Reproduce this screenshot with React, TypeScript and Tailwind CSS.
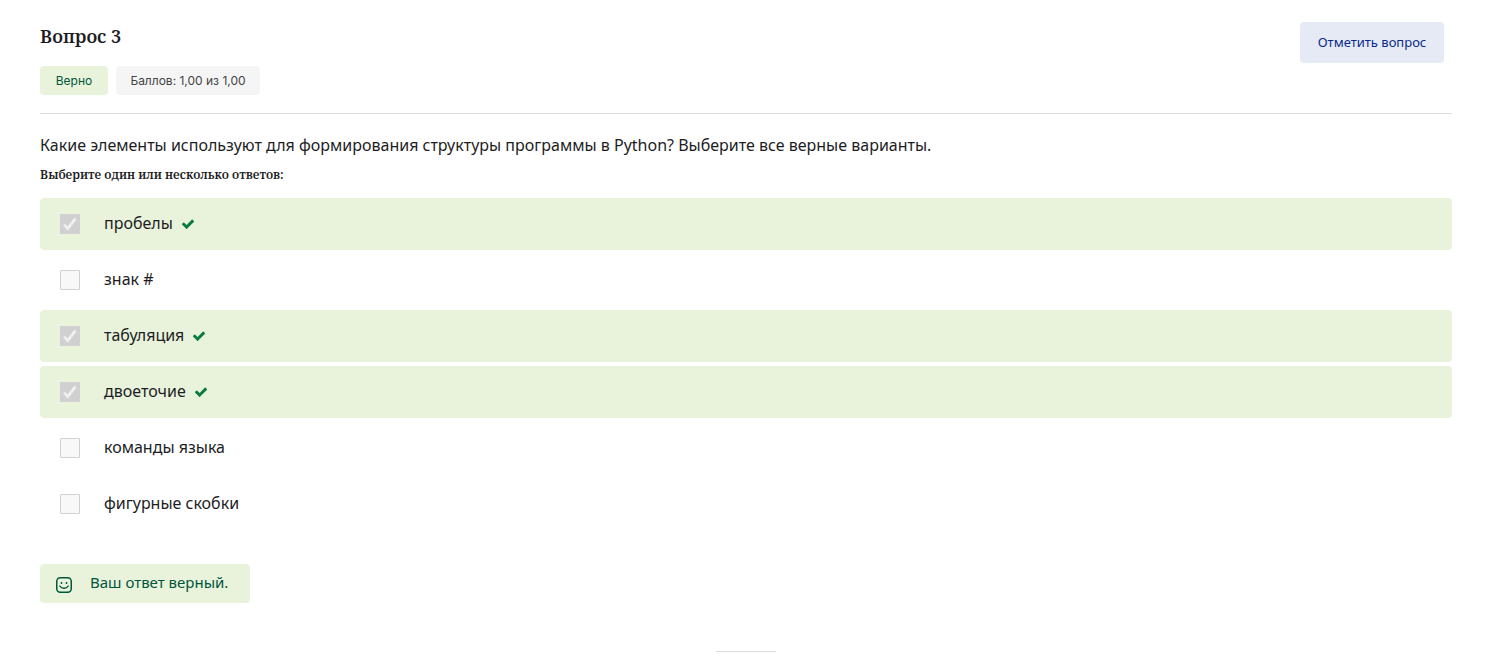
import React from "react";

type Answer = { id: string; label: string; chosen: boolean };

const answers: Answer[] = [
  { id: "a1", label: "пробелы", chosen: true },
  { id: "a2", label: "знак #", chosen: false },
  { id: "a3", label: "табуляция", chosen: true },
  { id: "a4", label: "двоеточие", chosen: true },
  { id: "a5", label: "команды языка", chosen: false },
  { id: "a6", label: "фигурные скобки", chosen: false },
];

const checkPath =
  "M1671 566q0 40-28 68l-724 724-136 136q-28 28-68 28t-68-28l-136-136-362-362q-28-28-28-68t28-68l136-136q28-28 68-28t68 28l294 295 656-657q28-28 68-28t68 28l136 136q28 28 28 68z";

function SmileIcon() {
  return (
    <svg width="16" height="16" viewBox="0 0 16 16" fill="none" stroke="currentColor" strokeWidth="1.5" strokeLinecap="round" aria-hidden="true">
      <rect x="0.75" y="0.75" width="14.5" height="14.5" rx="3.5" />
      <path d="M5.5 5.8v0.2M10.5 5.8v0.2" strokeWidth="1.8" />
      <path d="M3.8 9c1.8 3 6.6 3 8.4 0" strokeWidth="1.4" />
    </svg>
  );
}

function AnswerRow({ answer }: { answer: Answer }) {
  return (
    <div className={answer.chosen ? "flex h-[52px] items-center rounded bg-[#e9f3dc] px-5" : "flex h-[52px] items-center rounded px-5"}>
      <span className="relative flex size-5 shrink-0">
        <input
          id={answer.id}
          type="checkbox"
          disabled
          defaultChecked={answer.chosen}
          className="size-5 appearance-none rounded-[1px] border border-[#d0d0d0] bg-[#f8f8f8] checked:bg-[#d0d0d0]"
        />
        {answer.chosen && (
          <svg className="pointer-events-none absolute inset-0 size-5" viewBox="0 0 20 20" fill="none" stroke="#f0f0f0" strokeWidth="2.8" aria-hidden="true">
            <path d="M4.2 10.8l3.6 3.8L15.4 4.6" />
          </svg>
        )}
      </span>
      <label htmlFor={answer.id} className="ml-6 pb-0.5 text-base leading-6">
        {answer.label}
      </label>
      {answer.chosen && (
        <svg className="ml-2 size-3.5 text-[#0a7d3e]" viewBox="0 0 1792 1792" fill="currentColor" aria-hidden="true">
          <path d={checkPath} />
        </svg>
      )}
    </div>
  );
}

export default function App() {
  return (
    <main className="bg-white pr-[45px] pl-10 pt-[22px] font-['Noto_Sans',sans-serif] text-[#1d1d1f]">
      <header className="flex items-start justify-between border-b border-[#dcdcdc] pb-[18px]">
        <div>
          <h1 className="font-['Noto_Serif','DejaVu_Serif',serif] text-lg leading-7 font-semibold">Вопрос 3</h1>
          <div className="mt-4 flex gap-2 font-['Inter',sans-serif] text-xs leading-[15px]">
            <span className="flex h-[29px] w-[68px] items-center justify-center rounded bg-[#e9f3dc] text-[#00563b]">Верно</span>
            <span className="flex h-[29px] w-36 items-center justify-center rounded bg-[#f5f5f5] text-[#444]">Баллов: 1,00 из 1,00</span>
          </div>
        </div>
        <button type="button" className="mr-2 h-[41px] w-36 rounded bg-[#e5eaf5] text-[13px] text-[#0a2a8c]">
          Отметить вопрос
        </button>
      </header>
      <p className="mt-[19px] text-base leading-6">
        Какие элементы используют для формирования структуры программы в Python? Выберите все верные варианты.
      </p>
      <fieldset className="mt-2.5">
        <legend className="font-['Noto_Serif','DejaVu_Serif',serif] text-xs leading-4 font-semibold">Выберите один или несколько ответов:</legend>
        <div className="mt-[15px] flex flex-col gap-1">
          {answers.map((answer) => (
            <AnswerRow key={answer.id} answer={answer} />
          ))}
        </div>
      </fieldset>
      <div className="mt-[34px] flex h-[39px] w-[210px] items-center rounded bg-[#e9f3dc] px-4 text-[#00563b]">
        <div className="pt-0.5">
          <SmileIcon />
        </div>
        <p className="ml-[18px] pb-1 text-[15px] leading-5">Ваш ответ верный.</p>
      </div>
      <hr className="mx-auto mt-12 w-[60px] border-[#dcdcdc]" />
    </main>
  );
}
